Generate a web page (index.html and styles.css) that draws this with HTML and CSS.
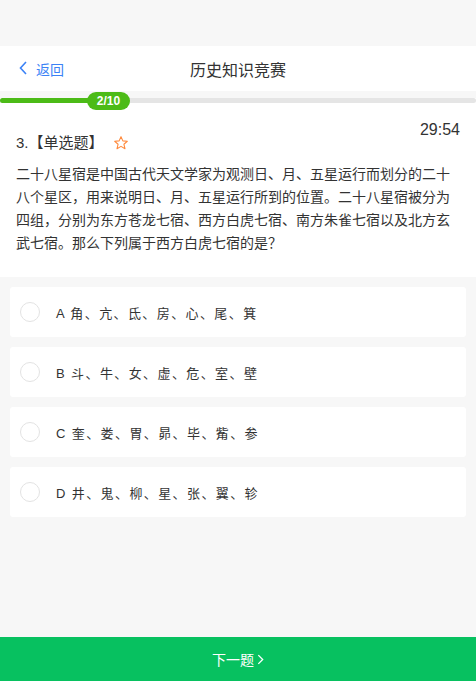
FILE: index.html
```html
<!DOCTYPE html>
<html lang="zh-CN">
<head>
  <meta charset="UTF-8" />
  <meta name="viewport" content="width=device-width, initial-scale=1.0" />
  <title>历史知识竞赛</title>
  <link rel="stylesheet" href="styles.css">
</head>
<body>
  <div class="page">

    <div class="header">
      <a class="back" href="#">
        <svg class="back-icon" viewBox="0 0 8 14" width="8" height="14">
          <path d="M7 1 L1.5 7 L7 13" fill="none" stroke="currentColor" stroke-width="1.6" />
        </svg>
        返回
      </a>
      <div class="title">历史知识竞赛</div>
    </div>

    <div class="question">
      <div class="progress">
        <div class="progress-fill" style="width: 90px;"></div>
        <span class="progress-badge">2/10</span>
      </div>

      <div class="question-head">
        <div class="question-type">
          3.【单选题】
          <svg class="star" viewBox="0 0 24 24" width="16" height="16">
            <path d="M12 2.5 L14.8 8.8 L21.5 9.4 L16.4 13.9 L18 20.6 L12 17 L6 20.6 L7.6 13.9 L2.5 9.4 L9.2 8.8 Z" fill="none" stroke="#ff8a3d" stroke-width="1.6" stroke-linejoin="round" />
          </svg>
        </div>
        <div class="timer">29:54</div>
      </div>

      <p class="question-text">二十八星宿是中国古代天文学家为观测日、月、五星运行而划分的二十八个星区，用来说明日、月、五星运行所到的位置。二十八星宿被分为四组，分别为东方苍龙七宿、西方白虎七宿、南方朱雀七宿以及北方玄武七宿。那么下列属于西方白虎七宿的是？</p>
    </div>

    <div class="options">
      <div class="option"><span class="radio"></span><span class="option-text">A 角、亢、氐、房、心、尾、箕</span></div>
      <div class="option"><span class="radio"></span><span class="option-text">B 斗、牛、女、虚、危、室、壁</span></div>
      <div class="option"><span class="radio"></span><span class="option-text">C 奎、娄、胃、昴、毕、觜、参</span></div>
      <div class="option"><span class="radio"></span><span class="option-text">D 井、鬼、柳、星、张、翼、轸</span></div>
    </div>

  </div>

  <button class="next-button">下一题
    <svg viewBox="0 0 8 12" width="7" height="11">
      <path d="M1.5 1 L6.5 6 L1.5 11" fill="none" stroke="currentColor" stroke-width="1.5" />
    </svg>
  </button>
</body>
</html>
```

FILE: styles.css
```css
* {
  box-sizing: border-box;
}

body {
  font-family: 'Liberation Sans', 'Noto Sans CJK SC', sans-serif;
  background-color: #f7f7f7;
  margin: 0;
  color: #333;
}

.page {
  padding-top: 46px;
  padding-bottom: 60px;
}

.header {
  position: relative;
  height: 45px;
  background-color: white;
  display: flex;
  align-items: center;
  justify-content: center;
}

.back {
  position: absolute;
  left: 19px;
  top: 0;
  height: 45px;
  display: flex;
  align-items: center;
  gap: 9px;
  font-size: 14px;
  color: #3b82f6;
  text-decoration: none;
}

.back-icon {
  margin-top: -1px;
}

.title {
  font-size: 16px;
  color: #333;
}

.question {
  margin-top: 7px;
  background-color: white;
  padding-bottom: 22px;
}

.progress {
  position: relative;
  height: 5px;
  margin-top: 1px;
  background-color: #e5e5e5;
  border-radius: 3px;
}

.progress-fill {
  height: 100%;
  background-color: #4cbb17;
  border-radius: 3px;
}

.progress-badge {
  position: absolute;
  left: 87px;
  top: -6px;
  width: 43px;
  height: 18px;
  line-height: 18px;
  border-radius: 9px;
  background-color: #4cbb17;
  color: white;
  font-size: 12px;
  font-weight: bold;
  text-align: center;
}

.question-head {
  display: flex;
  justify-content: space-between;
  align-items: flex-start;
  padding: 17px 16px 0 16px;
}

.question-type {
  display: flex;
  align-items: center;
  margin-top: 13px;
  font-size: 15px;
  line-height: 20px;
}

.star {
  margin-left: 9px;
}

.timer {
  font-size: 16px;
  line-height: 20px;
}

.question-text {
  margin: 10px 0 0 0;
  padding: 0 16px;
  font-size: 14px;
  line-height: 23px;
}

.options {
  padding: 10px;
  display: flex;
  flex-direction: column;
  gap: 10px;
}

.option {
  display: flex;
  align-items: center;
  height: 50px;
  padding: 0 10px;
  background-color: white;
  border-radius: 3px;
}

.radio {
  width: 20px;
  height: 20px;
  border: 1px solid #e3e3e3;
  border-radius: 50%;
  margin-right: 16px;
}

.option-text {
  font-size: 13px;
  letter-spacing: 1.4px;
  color: #333;
}

.next-button {
  position: fixed;
  left: 0;
  bottom: 0;
  width: 100%;
  height: 44px;
  border: none;
  background-color: #07c160;
  color: white;
  font-family: inherit;
  font-size: 14px;
  display: flex;
  align-items: center;
  justify-content: center;
  gap: 3px;
  cursor: pointer;
}
```
